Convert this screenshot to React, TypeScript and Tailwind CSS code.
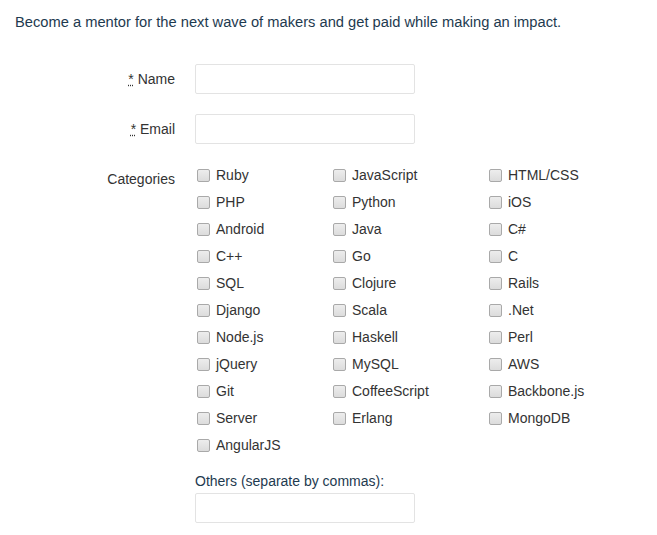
import React from "react";

const cats = [
  ["Ruby", "JavaScript", "HTML/CSS"],
  ["PHP", "Python", "iOS"],
  ["Android", "Java", "C#"],
  ["C++", "Go", "C"],
  ["SQL", "Clojure", "Rails"],
  ["Django", "Scala", ".Net"],
  ["Node.js", "Haskell", "Perl"],
  ["jQuery", "MySQL", "AWS"],
  ["Git", "CoffeeScript", "Backbone.js"],
  ["Server", "Erlang", "MongoDB"],
  ["AngularJS"],
];

function Box({ label }: { label: string }) {
  return (
    <label className="flex items-center h-[27px]">
      <span className="ml-[2px] w-[13px] h-[13px] rounded-[2px] border border-[#a9a9a9] bg-gradient-to-b from-[#ededed] to-[#dcdcdc] shrink-0" />
      <span className="ml-[6px] text-[14px] text-[#333]">{label}</span>
    </label>
  );
}

export default function App() {
  return (
    <div className="w-[657px] h-[535px] bg-white font-['Liberation_Sans',Arial,sans-serif] text-[#333] overflow-hidden">
      <p className="pt-[12px] pl-[15px] text-[14.7px] leading-[20px] text-[#1e3a4f]">
        Become a mentor for the next wave of makers and get paid while making an impact.
      </p>
      <div className="mt-[32px] flex flex-col">
        <div className="flex items-center h-[30px]">
          <div className="w-[175px] text-right text-[14px]">
            <abbr title="required">*</abbr> Name
          </div>
          <input className="ml-[20px] w-[220px] h-[30px] border border-[#e3e3e3] rounded-[2px] outline-none" />
        </div>
        <div className="flex items-center h-[30px] mt-[20px]">
          <div className="w-[175px] text-right text-[14px]">
            <abbr title="required">*</abbr> Email
          </div>
          <input className="ml-[20px] w-[220px] h-[30px] border border-[#e3e3e3] rounded-[2px] outline-none" />
        </div>
        <div className="flex mt-[16px]">
          <div className="w-[175px] text-right text-[14px] pt-[9px]">Categories</div>
          <div className="ml-[20px]">
            <div className="grid grid-cols-[136px_156px_auto] pt-[2px]">
              {cats.flat().map((c) => (
                <Box key={c} label={c} />
              ))}
            </div>
            <div className="mt-[12px] text-[14px] leading-[20px] text-[#1e3a4f]">Others (separate by commas):</div>
            <input className="mt-[2px] w-[220px] h-[30px] border border-[#e3e3e3] rounded-[2px] outline-none" />
          </div>
        </div>
      </div>
    </div>
  );
}
